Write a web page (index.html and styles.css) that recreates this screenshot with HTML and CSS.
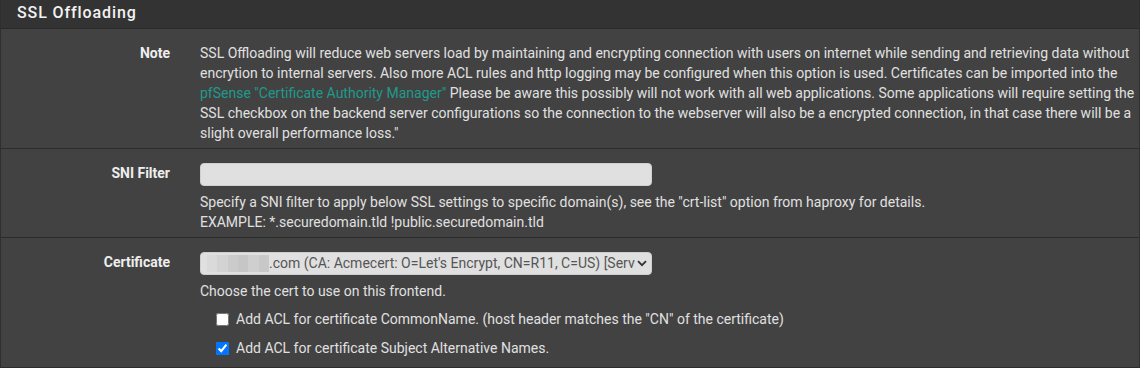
FILE: index.html
```html
<!DOCTYPE html>
<html lang="en">
<head>
  <meta charset="UTF-8" />
  <title>HAProxy - Frontend SSL</title>
  <link rel="stylesheet" href="styles.css">
</head>
<body>

  <div class="panel">
    <!-- Titulo del panel -->
    <div class="panel-heading">SSL Offloading</div>

    <div class="form-group">
      <div class="col-label">Note</div>
      <div class="col-field">
        SSL Offloading will reduce web servers load by maintaining and encrypting connection with users on internet while sending and retrieving data without encrytion to internal servers. Also more ACL rules and http logging may be configured when this option is used. Certificates can be imported into the <a href="#" class="enlace">pfSense "Certificate Authority Manager"</a> Please be aware this possibly will not work with all web applications. Some applications will require setting the SSL checkbox on the backend server configurations so the connection to the webserver will also be a encrypted connection, in that case there will be a slight overall performance loss."
      </div>
    </div>

    <div class="form-group">
      <div class="col-label">SNI Filter</div>
      <div class="col-field">
        <input type="text" class="campo" />
        <div class="ayuda">
          Specify a SNI filter to apply below SSL settings to specific domain(s), see the "crt-list" option from haproxy for details.<br>
          EXAMPLE: *.securedomain.tld !public.securedomain.tld
        </div>
      </div>
    </div>

    <div class="form-group">
      <div class="col-label">Certificate</div>
      <div class="col-field">
        <div class="campo selector">
          <span class="borroso">
            <i class="b1"></i><i class="b2"></i><i class="b3"></i><i class="b4"></i><i class="b5"></i><i class="b6"></i>
          </span>
          <span class="opcion">.com (CA: Acmecert: O=Let's Encrypt, CN=R11, C=US) [Server cert]</span>
          <svg class="flecha" width="10" height="7" viewBox="0 0 10 7">
            <path d="M1 1.2 L5 5.2 L9 1.2" fill="none" stroke="#333" stroke-width="1.8" />
          </svg>
        </div>
        <div class="ayuda">Choose the cert to use on this frontend.</div>
        <div class="casillas">
          <label class="casilla"><input type="checkbox" /> Add ACL for certificate CommonName. (host header matches the "CN" of the certificate)</label>
          <label class="casilla"><input type="checkbox" checked /> Add ACL for certificate Subject Alternative Names.</label>
        </div>
      </div>
    </div>
  </div>

</body>
</html>
```

FILE: styles.css
```css
body {
  margin: 0;
  font-family: Roboto, 'Noto Sans', sans-serif;
  font-size: 14px;
  line-height: 20px;
  background: #424242;
  color: #e0e0e0;
}

.panel {
  background: #424242;
  border-left: 1px solid #2f2f2f;
  border-right: 1px solid #2f2f2f;
}

.panel-heading {
  height: 28px;
  background: #333333;
  border-bottom: 1px solid #2a2a2a;
  padding-left: 16px;
  font-size: 16px;
  font-weight: 500;
  letter-spacing: 0.9px;
  line-height: 26px;
  color: #f2f2f2;
}

.form-group {
  display: grid;
  grid-template-columns: 169px 1fr;
  column-gap: 30px;
  padding: 14px 4px 5px 0;
  border-bottom: 1px solid #2c2c2c;
}

.col-label {
  text-align: right;
  font-weight: 700;
  color: #eeeeee;
}

.enlace {
  color: #1e9a8c;
  text-decoration: none;
}

.campo {
  display: block;
  box-sizing: border-box;
  width: 452px;
  height: 23px;
  margin: 0;
  border: 1px solid #cfcfcf;
  border-radius: 4px;
  background: #e0e0e0;
  font-family: Roboto, sans-serif;
  font-size: 14px;
  color: #555;
}

.ayuda {
  margin-top: 6px;
}

/* Selector de certificado dibujado a mano */
.selector {
  display: flex;
  align-items: center;
  padding: 0 4px 0 6px;
  overflow: hidden;
  white-space: nowrap;
}

.opcion {
  flex: 1;
  overflow: hidden;
  line-height: 21px;
}

.borroso {
  display: flex;
  height: 17px;
  flex-shrink: 0;
}

.borroso i {
  display: block;
  height: 100%;
}

.b1 { width: 10px; background: #dadada; }
.b2 { width: 11px; background: #d3d3d3; }
.b3 { width: 10px; background: #cbcbcb; }
.b4 { width: 10px; background: #c6c6c6; }
.b5 { width: 11px; background: #cfcfcf; }
.b6 { width: 10px; background: #c8c8c8; }

.flecha {
  flex-shrink: 0;
  margin-left: 2px;
}

.casillas {
  display: flex;
  flex-direction: column;
  gap: 9px;
  margin-top: 8px;
  margin-bottom: 4px;
}

.casilla {
  display: flex;
  align-items: center;
  height: 20px;
  padding-left: 16px;
}

.casilla input {
  width: 13px;
  height: 13px;
  margin: 0 7px 0 0;
}
```
